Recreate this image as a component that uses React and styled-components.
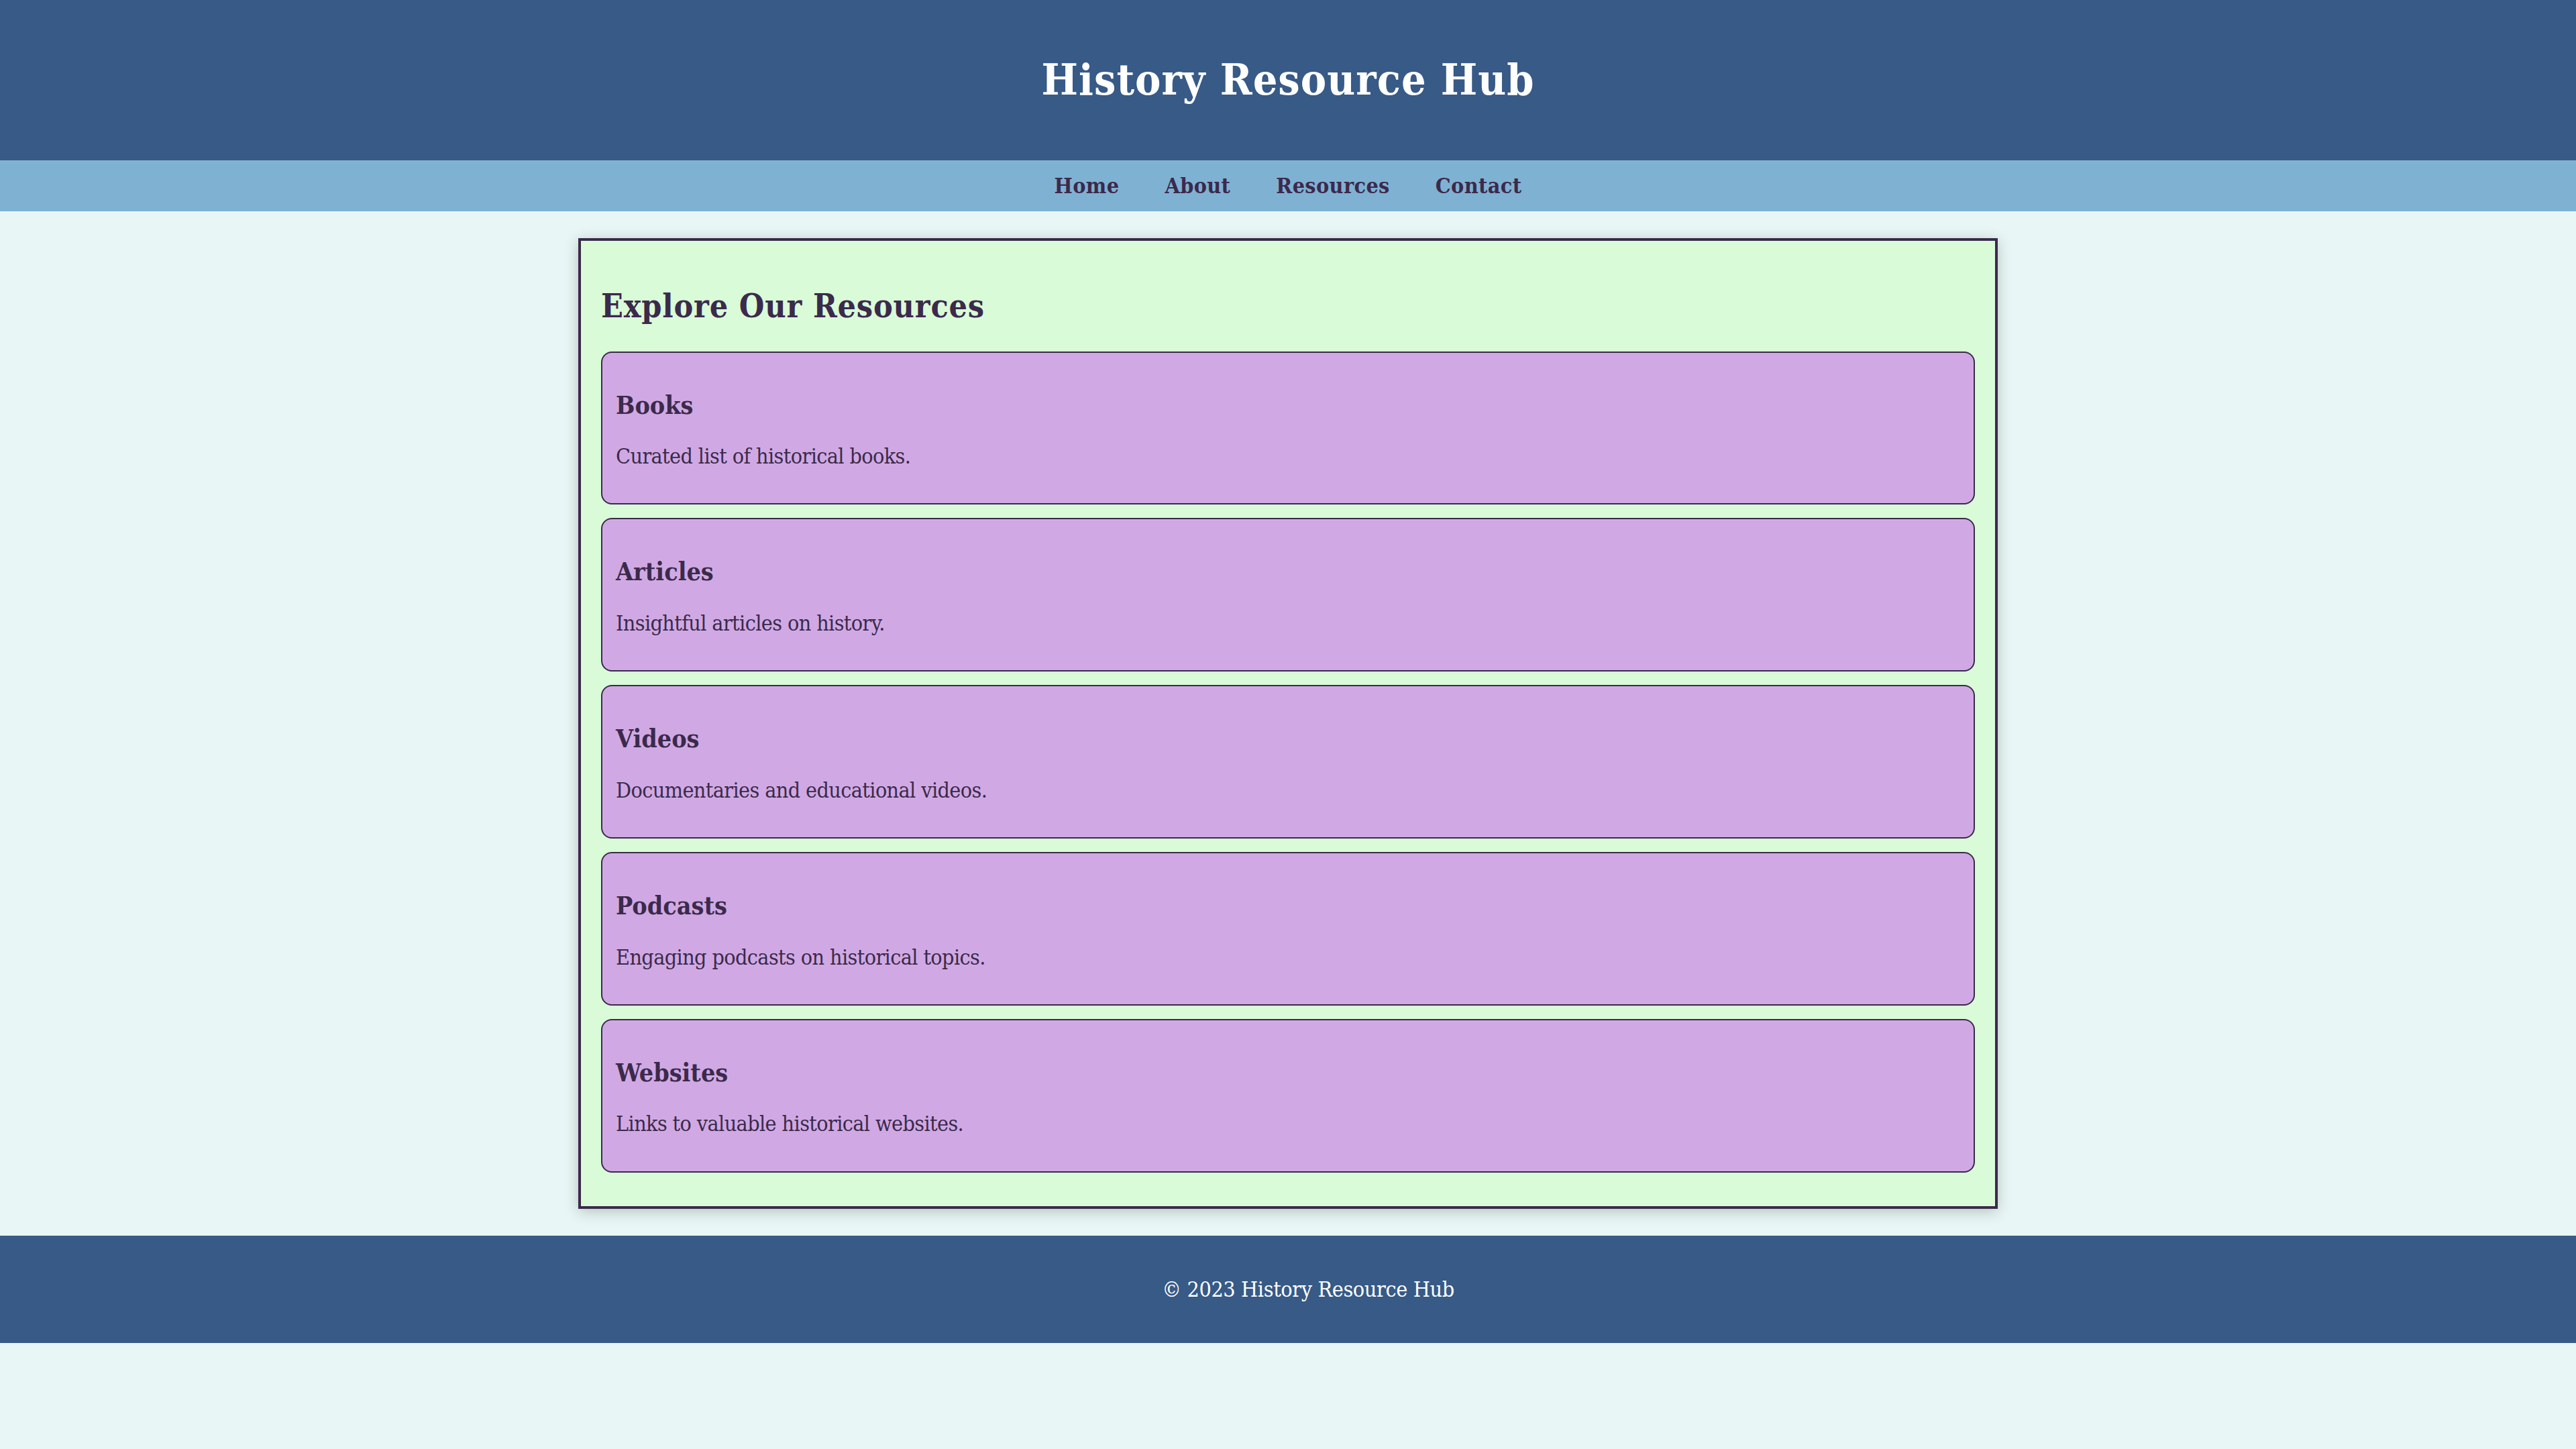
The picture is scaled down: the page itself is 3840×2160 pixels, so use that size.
import React from "react";
import styled, { createGlobalStyle } from "styled-components";

const GlobalStyle = createGlobalStyle`
	body {
		margin: 0;
		background: #e8f7f5;
		font-family: "DejaVu Serif Condensed", "DejaVu Serif", "Liberation Serif", serif;
		font-stretch: condensed;
		font-size: 32px;
		line-height: 1.136;
		color: #3b2a4b;
	}
`;

const Header = styled.header`
	background: #375a87;
	color: #ffffff;
	text-align: center;
	padding: 40px 0;

	& h1 {
		margin: 43px 0;
		font-size: 64px;
		font-weight: 700;
		letter-spacing: 0.017em;
	}
`;

const Nav = styled.nav`
	background: #7fb1d3;
	padding: 20px 0;
	display: flex;
	justify-content: center;
	gap: 68px;
`;

const NavLink = styled.a`
	color: #3b2a4b;
	font-weight: 700;
	letter-spacing: 0.4px;
	text-decoration: none;
`;

const Main = styled.main`
	box-sizing: border-box;
	width: 2116px;
	margin: 40px auto;
	padding: 30px;
	background: #d9fbd8;
	border: 4px solid #3b2a4b;
	box-shadow: 0 4px 20px rgba(0, 0, 0, 0.22);
`;

const SectionTitle = styled.h2`
	font-size: 48px;
	margin: 40px 0;
	letter-spacing: 0.017em;
`;

const Card = styled.section`
	background: #d0a9e4;
	border: 2px solid #3b2a4b;
	border-radius: 16px;
	padding: 20px;
	margin-bottom: 20px;

	& h3 {
		font-size: 37.4px;
		margin: 37px 0;
	}
	& p {
		margin: 32px 0;
		letter-spacing: -0.6px;
	}
`;

const Footer = styled.footer`
	background: #375a87;
	color: #ffffff;
	text-align: center;
	padding: 30px 0 30px 60px;

	& p {
		margin: 32px 0;
		letter-spacing: -0.35px;
	}
`;

const resources = [
	{ title: "Books", text: "Curated list of historical books." },
	{ title: "Articles", text: "Insightful articles on history." },
	{ title: "Videos", text: "Documentaries and educational videos." },
	{ title: "Podcasts", text: "Engaging podcasts on historical topics." },
	{ title: "Websites", text: "Links to valuable historical websites." },
];

export default function App() {
	return (
		<>
			<GlobalStyle />
			<Header>
				<h1>History Resource Hub</h1>
			</Header>
			<Nav>
				<NavLink href="#home">Home</NavLink>
				<NavLink href="#about">About</NavLink>
				<NavLink href="#resources">Resources</NavLink>
				<NavLink href="#contact">Contact</NavLink>
			</Nav>
			<Main>
				<SectionTitle>Explore Our Resources</SectionTitle>
				{resources.map((r) => (
					<Card key={r.title}>
						<h3>{r.title}</h3>
						<p>{r.text}</p>
					</Card>
				))}
			</Main>
			<Footer>
				<p>© 2023 History Resource Hub</p>
			</Footer>
		</>
	);
}
